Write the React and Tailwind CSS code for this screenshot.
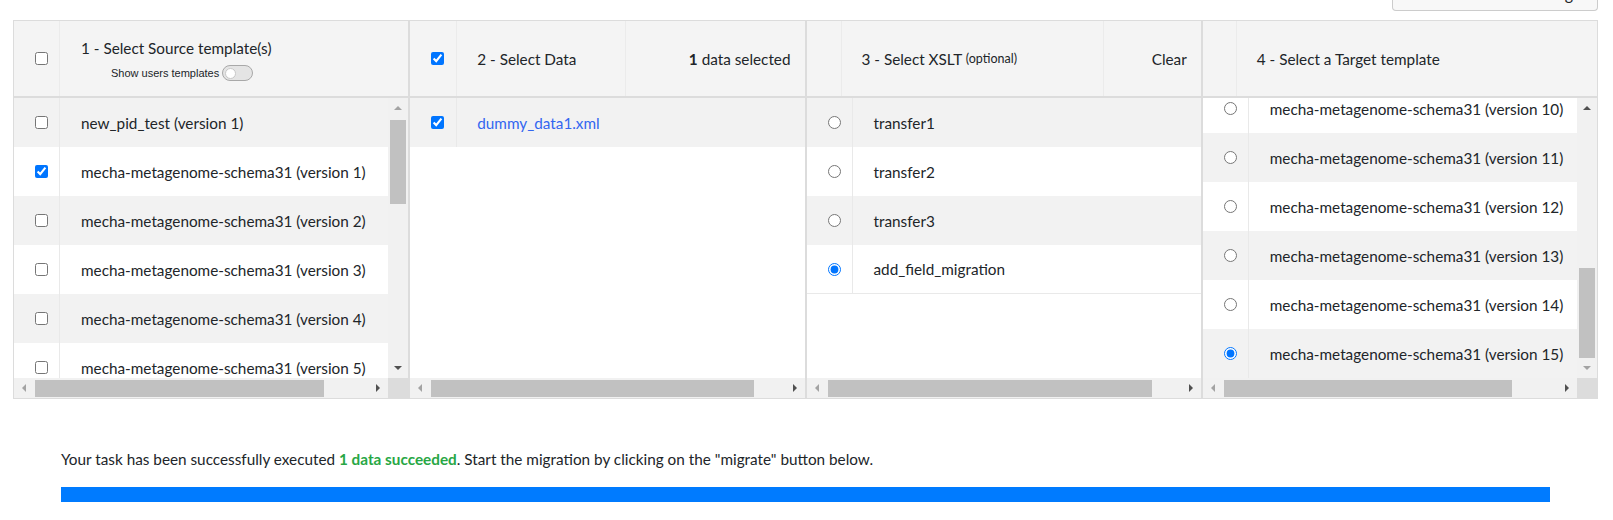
import React from "react";

function Tri({ dir, dark }) {
  const fill = dark ? "#505050" : "#a3a3a3";
  const vert = dir === "up" || dir === "down";
  const pts =
    dir === "up" ? "0,4 4,0 8,4" : dir === "down" ? "0,0 8,0 4,4" : dir === "left" ? "4,0 4,8 0,4" : "0,0 0,8 4,4";
  return (
    <svg width={vert ? 8 : 4} height={vert ? 4 : 8} viewBox={vert ? "0 0 8 4" : "0 0 4 8"}>
      <polygon points={pts} fill={fill} />
    </svg>
  );
}

function HScroll({ thumbClass, corner }) {
  return (
    <div className="flex h-[20px] shrink-0">
      <div className="flex flex-1 bg-[#f1f1f1]">
        <div className="flex w-[20px] items-center justify-center">
          <Tri dir="left" />
        </div>
        <div className="flex flex-1 items-center">
          <div className={"ml-[1px] h-[17px] bg-[#c1c1c1] " + thumbClass} />
        </div>
        <div className="flex w-[20px] items-center justify-center">
          <Tri dir="right" dark />
        </div>
      </div>
      {corner && <div className="w-[20px] bg-[#dcdcdc]" />}
    </div>
  );
}

function VScroll({ children, upDark, downDark }) {
  return (
    <div className="flex w-[20px] shrink-0 flex-col bg-[#f1f1f1]">
      <div className="flex h-[20px] shrink-0 items-center justify-center">
        <Tri dir="up" dark={upDark} />
      </div>
      <div className="flex min-h-0 flex-1 flex-col">{children}</div>
      <div className="flex h-[20px] shrink-0 items-center justify-center">
        <Tri dir="down" dark={downDark} />
      </div>
    </div>
  );
}

function Check({ checked }) {
  return <input type="checkbox" defaultChecked={checked} className="m-0 h-[13px] w-[13px]" />;
}
function Radio({ checked, name }) {
  return <input type="radio" name={name} defaultChecked={checked} className="m-0 h-[13px] w-[13px]" />;
}

function Row({ gray, control, children, border }) {
  return (
    <div
      className={
        "flex h-[49px] shrink-0 items-center " +
        (gray ? "bg-[#f2f2f2] " : "bg-white ") +
        (border ? "border-b border-[#e9e9e9]" : "")
      }
    >
      <div className="flex h-full w-[46px] shrink-0 items-center border-r border-[#e9e9e9] pl-[21px]">{control}</div>
      <div className="whitespace-nowrap pl-[21px]">{children}</div>
    </div>
  );
}

export default function App() {
  const src = [
    ["new_pid_test (version 1)", false],
    ["mecha-metagenome-schema31 (version 1)", true],
    ["mecha-metagenome-schema31 (version 2)", false],
    ["mecha-metagenome-schema31 (version 3)", false],
    ["mecha-metagenome-schema31 (version 4)", false],
    ["mecha-metagenome-schema31 (version 5)", false],
  ];
  const xslt = [
    ["transfer1", false],
    ["transfer2", false],
    ["transfer3", false],
    ["add_field_migration", true],
  ];
  const targets = [10, 11, 12, 13, 14, 15];

  return (
    <div className="h-[520px] w-full overflow-hidden bg-white font-['Lato',sans-serif] text-[15.3px] leading-[24px] text-[#212529]">
      {/* top button remnant */}
      <div className="flex h-[11px] justify-end pr-[15px]">
        <div className="flex h-[11px] w-[206px] items-end justify-end overflow-hidden rounded-b-[4px] border border-t-0 border-[#cccccc] bg-[#f8f8f8] pr-[24px]">
          <span className="mb-[8px] whitespace-nowrap text-[16px] leading-[16px]">Refresh listing</span>
        </div>
      </div>

      {/* table */}
      <div className="ml-[13px] mr-[15px] mt-[9px] flex h-[379px] border border-[#dcdcdc]">
        {/* col 1 */}
        <div className="flex min-h-0 min-w-0 flex-1 basis-0 flex-col">
          <div className="flex h-[77px] shrink-0 border-b-2 border-[#dcdcdc] bg-[#f4f4f4]">
            <div className="flex w-[46px] shrink-0 items-center border-r border-[#ebebeb] pl-[21px]">
              <Check />
            </div>
            <div className="flex flex-col justify-center gap-[5px] pl-[21px]">
              <div className="whitespace-nowrap">1 - Select Source template(s)</div>
              <div className="flex items-center pl-[30px]">
                <span className="font-['Liberation_Sans',sans-serif] text-[11px] leading-[16px]">Show users templates</span>
                <div className="ml-[3px] flex h-[16px] w-[31px] items-center rounded-full border border-[#a8a8a8] bg-[#e4e4e4] pl-[2px]">
                  <div className="h-[11px] w-[11px] rounded-full border border-[#c8c8c8] bg-white" />
                </div>
              </div>
            </div>
          </div>
          <div className="flex min-h-0 flex-1">
            <div className="flex min-w-0 flex-1 flex-col overflow-hidden">
              {src.map(([t, c], i) => (
                <Row key={t} gray={i % 2 === 0} control={<Check checked={c} />}>
                  {t}
                </Row>
              ))}
            </div>
            <VScroll downDark>
              <div className="mx-[2px] mt-[2px] h-[84px] bg-[#c1c1c1]" />
            </VScroll>
          </div>
          <HScroll thumbClass="w-[289px]" corner />
        </div>

        {/* col 2 */}
        <div className="flex min-h-0 min-w-0 flex-1 basis-0 flex-col border-l-2 border-[#dcdcdc]">
          <div className="flex h-[77px] shrink-0 border-b-2 border-[#dcdcdc] bg-[#f4f4f4]">
            <div className="flex w-[47px] shrink-0 items-center border-r border-[#ebebeb] pl-[21px]">
              <Check checked />
            </div>
            <div className="flex w-[169px] shrink-0 items-center whitespace-nowrap border-r border-[#ebebeb] pl-[20px]">
              2 - Select Data
            </div>
            <div className="flex flex-1 items-center justify-end whitespace-nowrap pr-[14px]">
              <span className="font-bold">1</span>&nbsp;data selected
            </div>
          </div>
          <div className="flex min-h-0 flex-1 flex-col overflow-hidden">
            <div className="flex h-[49px] shrink-0 items-center bg-[#f2f2f2]">
              <div className="flex h-full w-[47px] shrink-0 items-center border-r border-[#e9e9e9] pl-[21px]">
                <Check checked />
              </div>
              <div className="pl-[20px] text-[#3366f0]">dummy_data1.xml</div>
            </div>
          </div>
          <HScroll thumbClass="w-[323px]" />
        </div>

        {/* col 3 */}
        <div className="flex min-h-0 min-w-0 flex-1 basis-0 flex-col border-l-2 border-[#dcdcdc]">
          <div className="flex h-[77px] shrink-0 border-b-2 border-[#dcdcdc] bg-[#f4f4f4]">
            <div className="w-[35px] shrink-0 border-r border-[#ebebeb]" />
            <div className="flex w-[262px] shrink-0 items-center whitespace-nowrap border-r border-[#ebebeb] pl-[20px]">
              3 - Select XSLT&nbsp;<span className="text-[12.5px]">(optional)</span>
            </div>
            <div className="flex flex-1 items-center justify-end pr-[14px]">Clear</div>
          </div>
          <div className="flex min-h-0 flex-1 flex-col overflow-hidden">
            {xslt.map(([t, c], i) => (
              <Row key={t} gray={i % 2 === 0} border={i === xslt.length - 1} control={<Radio checked={c} name="xslt" />}>
                {t}
              </Row>
            ))}
          </div>
          <HScroll thumbClass="w-[324px]" />
        </div>

        {/* col 4 */}
        <div className="flex min-h-0 min-w-0 flex-1 basis-0 flex-col border-l-2 border-[#dcdcdc]">
          <div className="flex h-[77px] shrink-0 border-b-2 border-[#dcdcdc] bg-[#f4f4f4]">
            <div className="w-[34px] shrink-0 border-r border-[#ebebeb]" />
            <div className="flex flex-1 items-center whitespace-nowrap pl-[20px]">4 - Select a Target template</div>
          </div>
          <div className="flex min-h-0 flex-1">
            <div className="flex min-w-0 flex-1 flex-col justify-end overflow-hidden">
              {targets.map((v, i) => (
                <Row key={v} gray={i % 2 === 1} control={<Radio checked={v === 15} name="target" />}>
                  mecha-metagenome-schema31 (version {v})
                </Row>
              ))}
            </div>
            <VScroll upDark>
              <div className="flex-1" />
              <div className="mx-[2px] h-[90px] shrink-0 bg-[#c1c1c1]" />
            </VScroll>
          </div>
          <HScroll thumbClass="w-[288px]" corner />
        </div>
      </div>

      {/* bottom */}
      <div className="ml-[61px] mr-[63px] mt-[49px]">
        <p className="text-[15.3px] leading-[22px]">
          Your task has been successfully executed <span className="font-bold text-[#28a745]">1 data succeeded</span>. Start the
          migration by clicking on the "migrate" button below.
        </p>
        <div className="mt-[17px] h-[15px] bg-[#007bff]" />
      </div>
    </div>
  );
}
